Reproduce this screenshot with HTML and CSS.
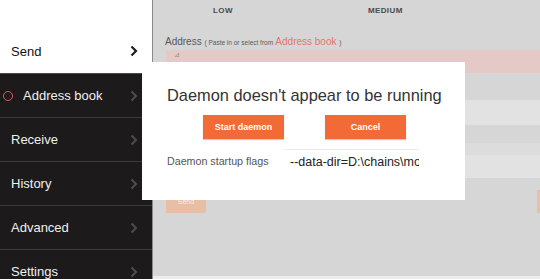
FILE: index.html
```html
<!DOCTYPE html>
<html lang="en">
<head>
    <meta charset="UTF-8">
    <meta name="viewport" content="width=device-width, initial-scale=1.0">
    <title>Wallet - Send</title>
    <link rel="stylesheet" href="styles.css">
</head>
<body>
    <div class="app">
        <aside class="sidebar">
            <div class="side-top"></div>
            <a class="nav-item light" href="#send">
                <span>Send</span>
                <svg class="chev" width="8" height="12" viewBox="0 0 8 12"><polyline points="1.5,1.5 6,6 1.5,10.5" /></svg>
            </a>
            <div class="side-dark">
                <a class="nav-item active" href="#book">
                    <span class="ring"></span>
                    <span>Address book</span>
                    <svg class="chev" width="8" height="12" viewBox="0 0 8 12"><polyline points="1.5,1.5 6,6 1.5,10.5" /></svg>
                </a>
                <a class="nav-item" href="#receive">
                    <span>Receive</span>
                    <svg class="chev" width="8" height="12" viewBox="0 0 8 12"><polyline points="1.5,1.5 6,6 1.5,10.5" /></svg>
                </a>
                <a class="nav-item" href="#history">
                    <span>History</span>
                    <svg class="chev" width="8" height="12" viewBox="0 0 8 12"><polyline points="1.5,1.5 6,6 1.5,10.5" /></svg>
                </a>
                <a class="nav-item" href="#advanced">
                    <span>Advanced</span>
                    <svg class="chev" width="8" height="12" viewBox="0 0 8 12"><polyline points="1.5,1.5 6,6 1.5,10.5" /></svg>
                </a>
                <a class="nav-item" href="#settings">
                    <span>Settings</span>
                    <svg class="chev" width="8" height="12" viewBox="0 0 8 12"><polyline points="1.5,1.5 6,6 1.5,10.5" /></svg>
                </a>
            </div>
        </aside>

        <main class="content">
            <div class="fee-head">
                <span class="fee-low">LOW</span>
                <span class="fee-med">MEDIUM</span>
            </div>
            <div class="addr-label">
                Address <small>( Paste in or select from</small> <a href="#book">Address book</a> <small>)</small>
            </div>
            <div class="addr-input"><span class="addr-icon">&#8895;</span></div>
            <div class="rows">
                <div class="row dark" style="height:27px"></div>
                <div class="row" style="height:25px"></div>
                <div class="row dark" style="height:18px"></div>
                <div class="row mid" style="height:12px"></div>
                <div class="row" style="height:23px"></div>
                <div class="row dark" style="height:12px"></div>
            </div>
            <div class="send-row">
                <button class="send-btn">Send</button>
                <span class="edge-btn"></span>
            </div>
        </main>

        <div class="modal">
            <h2>Daemon doesn't appear to be running</h2>
            <div class="modal-buttons">
                <button class="btn">Start daemon</button>
                <button class="btn">Cancel</button>
            </div>
            <div class="flags">
                <label>Daemon startup flags</label>
                <div class="flags-input">--data-dir=D:\chains\monero</div>
            </div>
        </div>
    </div>
</body>
</html>
```

FILE: styles.css
```css
body {
    margin: 0;
    padding: 0;
    font-family: 'Liberation Sans', Arial, sans-serif;
    background-color: #ffffff;
    overflow: hidden;
}
.app {
    position: relative;
    display: flex;
    width: 540px;
    height: 279px;
    overflow: hidden;
}
.sidebar {
    width: 152px;
    flex-shrink: 0;
    display: flex;
    flex-direction: column;
    overflow: hidden;
    border-right: 1px solid #8a8a8a;
}
.side-top {
    height: 29px;
    flex-shrink: 0;
    background-color: #ffffff;
}
.nav-item {
    display: flex;
    flex-shrink: 0;
    align-items: center;
    height: 43px;
    padding: 0 14px 0 11px;
    font-size: 13px;
    color: #f0f0f0;
    text-decoration: none;
    border-bottom: 1px solid #3c3b3b;
}
.nav-item span:last-of-type {
    flex: 1;
}
.nav-item.light {
    height: 44px;
    color: #111111;
    background-color: #ffffff;
    border-bottom: none;
}
.side-dark {
    flex: 1 0 auto;
    background-color: #1c1a1a;
    border-top: 1px solid #4a4848;
}
.nav-item.active {
    padding-left: 3px;
}
.ring {
    width: 8px;
    height: 8px;
    border: 1.5px solid #d9566a;
    border-radius: 50%;
    margin-right: 10px;
    flex: none !important;
}
.chev {
    fill: none;
    stroke: #4e4d4d;
    stroke-width: 2;
}
.nav-item.light .chev {
    stroke: #1f1f1f;
    stroke-width: 2.2;
}
.content {
    flex: 1;
    background-color: #d6d6d6;
    display: flex;
    flex-direction: column;
    border-bottom: 3px solid #ececec;
}
.fee-head {
    height: 20px;
    flex-shrink: 0;
    display: flex;
    align-items: center;
    font-size: 8px;
    font-weight: bold;
    color: #4a4a4a;
    letter-spacing: 0.4px;
}
.fee-low {
    margin-left: 60px;
}
.fee-med {
    margin-left: 135px;
}
.addr-label {
    margin: 16px 0 0 12px;
    height: 14px;
    flex-shrink: 0;
    font-size: 10px;
    color: #585858;
}
.addr-label small {
    font-size: 6.5px;
    color: #5a5a5a;
}
.addr-label a {
    color: #e2756c;
    text-decoration: none;
}
.addr-input {
    height: 23px;
    flex-shrink: 0;
    margin-left: 13px;
    background-color: #e4c9c6;
}
.addr-icon {
    display: block;
    margin: 1px 0 0 8px;
    font-size: 7px;
    color: #9a8a88;
}
.rows {
    display: flex;
    flex-direction: column;
    flex-shrink: 0;
}
.row {
    background-color: #e2e2e2;
}
.row.dark {
    background-color: #d6d6d6;
}
.row.mid {
    background-color: #dcdcdc;
}
.send-row {
    display: flex;
    justify-content: space-between;
    align-items: flex-start;
    padding: 0 0 0 13px;
}
.send-btn {
    width: 40px;
    height: 23px;
    border: none;
    background-color: #e8bea4;
    color: #f6eee8;
    font-size: 7px;
    font-family: 'Liberation Sans', Arial, sans-serif;
    padding: 0;
}
.edge-btn {
    width: 3px;
    height: 23px;
    background-color: #e7bfa6;
}
.modal {
    position: absolute;
    left: 142px;
    top: 62px;
    width: 323px;
    height: 138px;
    background-color: #ffffff;
    box-sizing: border-box;
    padding: 21px 0 0 25px;
}
.modal h2 {
    margin: 0;
    font-size: 16.4px;
    font-weight: normal;
    color: #333333;
    line-height: 24px;
    white-space: nowrap;
}
.modal-buttons {
    display: flex;
    gap: 41px;
    margin: 8px 0 0 36px;
}
.btn {
    width: 81px;
    height: 24px;
    border: none;
    background-color: #f26a36;
    color: #ffffff;
    font-family: 'Liberation Sans', Arial, sans-serif;
    font-size: 9px;
    font-weight: bold;
    box-shadow: 0 1px 1px rgba(0, 0, 0, 0.2);
}
.flags {
    display: flex;
    align-items: center;
    margin-top: 10px;
}
.flags label {
    width: 117px;
    font-size: 10.7px;
    color: #555555;
    margin-top: -2px;
}
.flags-input {
    width: 129px;
    height: 24px;
    line-height: 24px;
    padding-left: 6px;
    border-top: 1px solid #ececec;
    overflow: hidden;
    white-space: nowrap;
    font-size: 12.5px;
    color: #222222;
}
```
